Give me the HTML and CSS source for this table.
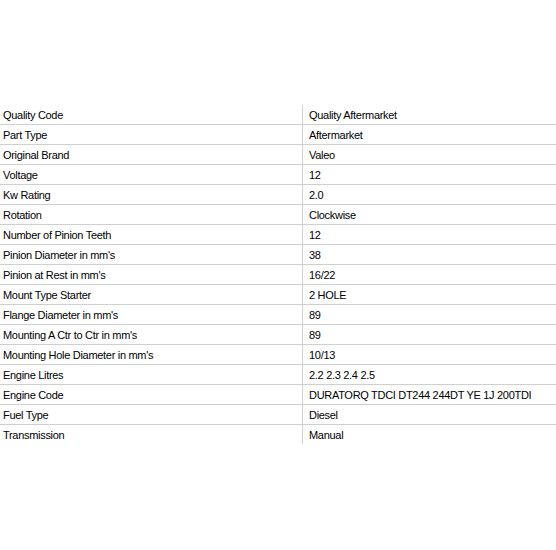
FILE: index.html
```html
<!DOCTYPE html>
<html>
<head>
<meta charset="utf-8">
<link rel="stylesheet" href="styles.css">
</head>
<body>
<table class="specs">
<tbody>
<tr><td class="k">Quality Code</td><td class="v">Quality Aftermarket</td></tr>
<tr><td class="k">Part Type</td><td class="v">Aftermarket</td></tr>
<tr><td class="k">Original Brand</td><td class="v">Valeo</td></tr>
<tr><td class="k">Voltage</td><td class="v">12</td></tr>
<tr><td class="k">Kw Rating</td><td class="v">2.0</td></tr>
<tr><td class="k">Rotation</td><td class="v">Clockwise</td></tr>
<tr><td class="k">Number of Pinion Teeth</td><td class="v">12</td></tr>
<tr><td class="k">Pinion Diameter in mm's</td><td class="v">38</td></tr>
<tr><td class="k">Pinion at Rest in mm's</td><td class="v">16/22</td></tr>
<tr><td class="k">Mount Type Starter</td><td class="v">2 HOLE</td></tr>
<tr><td class="k">Flange Diameter in mm's</td><td class="v">89</td></tr>
<tr><td class="k">Mounting A Ctr to Ctr in mm's</td><td class="v">89</td></tr>
<tr><td class="k">Mounting Hole Diameter in mm's</td><td class="v">10/13</td></tr>
<tr><td class="k">Engine Litres</td><td class="v">2.2 2.3 2.4 2.5</td></tr>
<tr><td class="k">Engine Code</td><td class="v">DURATORQ TDCI DT244 244DT YE 1J 200TDI</td></tr>
<tr><td class="k">Fuel Type</td><td class="v">Diesel</td></tr>
<tr><td class="k">Transmission</td><td class="v">Manual</td></tr>
</tbody>
</table>
</body>
</html>
```
FILE: styles.css
```css
html, body {
  margin: 0;
  padding: 0;
  background: #fff;
}
body {
  padding-top: 105px;
  font-family: "Liberation Sans", Arial, sans-serif;
  font-size: 11px;
  letter-spacing: -0.3px;
  color: #000;
}
.specs {
  width: 556px;
  border-collapse: collapse;
  table-layout: fixed;
}
.specs td {
  height: 18px;
  padding: 1px 0 0 0;
  line-height: 18px;
  white-space: nowrap;
  vertical-align: middle;
}
.specs tr {
  border-bottom: 1px solid #cfcfcf;
}
.specs tr:last-child {
  border-bottom: none;
}
.specs .k {
  width: 299px;
  padding-left: 3px;
  border-right: 1px solid #cfcfcf;
}
.specs .v {
  padding-left: 6px;
}
```
